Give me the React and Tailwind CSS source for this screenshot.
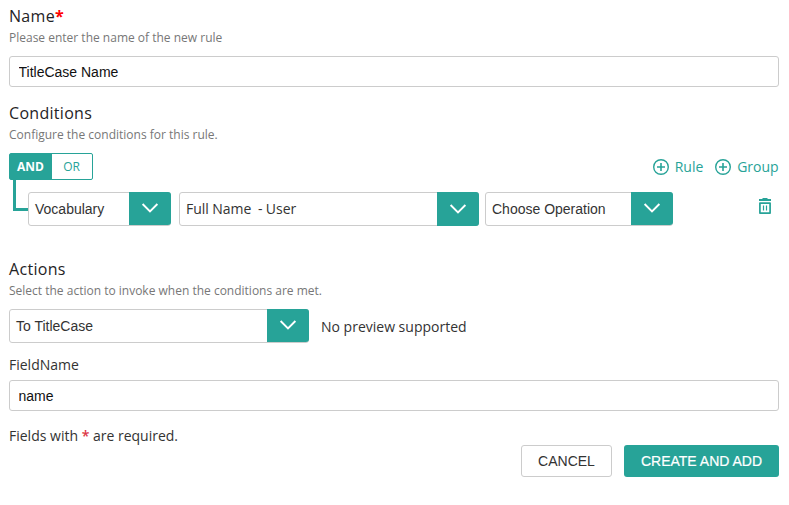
import React from "react";

const arial = "font-['Liberation_Sans',Arial,sans-serif]";

function Heading({ children }) {
  return <h2 className="h-6 text-[16px] leading-6 font-medium tracking-[0.3px] text-[#1f2326]">{children}</h2>;
}

function Hint({ children }) {
  return <p className="h-5 text-[12px] leading-5 text-[#777777] whitespace-nowrap">{children}</p>;
}

function TextField({ value }) {
  return (
    <input
      defaultValue={value}
      className={`${arial} block h-[31px] w-full rounded-[3px] border border-[#cccccc] bg-white px-[8.5px] pt-px text-[14px] text-[#111111] outline-none`}
    />
  );
}

function Select({ label, width, full, labelClass }) {
  return (
    <div className={`flex h-[34px] shrink-0 rounded-[3px] border border-[#cccccc] ${width}`}>
      <span className={`flex-1 whitespace-pre pl-[6px] text-[14px] leading-[32px] ${labelClass}`}>{label}</span>
      <button
        className={`-mt-px -mr-px flex w-[42px] items-center justify-center rounded-r-[3px] bg-[#27a398] ${full ? "h-[34px]" : "h-[33px]"}`}
      >
        <svg width="18" height="12" viewBox="0 0 18 12" fill="none" stroke="white" strokeWidth="1.9" className={full ? "" : "-mt-[2px]"}>
          <path d="M1.6 2 9 9.4 16.4 2" />
        </svg>
      </button>
    </div>
  );
}

function AddLink({ children }) {
  return (
    <button className="flex items-center gap-[6px] text-[14px] leading-5 text-[#27a398]">
      <svg width="16" height="16" viewBox="0 0 16 16" fill="none" stroke="currentColor" strokeWidth="1.4">
        <circle cx="8" cy="8" r="7.3" />
        <path d="M8 4v8M4 8h8" strokeWidth="1.6" />
      </svg>
      {children}
    </button>
  );
}

function Trash() {
  return (
    <svg width="12" height="16" viewBox="0 0 12 16" fill="none" stroke="#27a398">
      <path d="M0 2h12" strokeWidth="2" />
      <path d="M3.5.5h5" strokeWidth="1" />
      <path d="M.9 5.1h10.2v10H.9z" strokeWidth="1.7" strokeLinejoin="round" />
      <path d="M4.5 7.5v5M7.5 7.5v5" strokeWidth="1.2" />
    </svg>
  );
}

export default function App() {
  return (
    <div className="h-[505px] w-[789px] overflow-hidden bg-white pt-1 pr-[10px] pl-[9px] font-['Open_Sans',sans-serif] text-[#333333]">
      <section className="flex h-[97px] flex-col">
        <Heading>
          Name<span className="font-bold text-[#ff0000]">*</span>
        </Heading>
        <Hint>Please enter the name of the new rule</Hint>
        <div className="pt-2">
          <TextField value="TitleCase Name" />
        </div>
      </section>

      <section className="h-[156px]">
        <Heading>Conditions</Heading>
        <Hint>Configure the conditions for this rule.</Hint>
        <div className="flex items-center justify-between pt-2">
          <div className="flex h-[27px] w-[84px] rounded-[2px] border border-[#27a398] text-[12px] leading-[26px]">
            <button className="w-[42px] bg-[#27a398] pr-px font-bold text-white">AND</button>
            <button className="flex-1 pr-px text-[#27a398]">OR</button>
          </div>
          <div className="mr-[0.4px] flex gap-[11.8px]">
            <AddLink>Rule</AddLink>
            <AddLink>Group</AddLink>
          </div>
        </div>
        <div className="flex items-start">
          <div className="ml-1 h-[31px] w-[15px] shrink-0 border-b-[3px] border-l-[3px] border-[#27a398]" />
          <div className="flex flex-1 items-start pt-3">
            <Select label="Vocabulary" width="w-[143px]" labelClass={arial} />
            <div className="ml-2">
              <Select label="Full Name  - User" width="w-[300px]" full labelClass="[word-spacing:-0.3px]" />
            </div>
            <div className="ml-[6px]">
              <Select label="Choose Operation" width="w-[188px]" labelClass={arial} />
            </div>
            <button className="mt-[6px] mr-2 ml-auto">
              <Trash />
            </button>
          </div>
        </div>
      </section>

      <section>
        <Heading>Actions</Heading>
        <Hint>Select the action to invoke when the conditions are met.</Hint>
        <div className="flex items-center gap-3 pt-2">
          <Select label="To TitleCase" width="w-[300px]" labelClass={arial} />
          <span className="pt-[2px] text-[14px] leading-5">No preview supported</span>
        </div>
        <label className="mt-[12px] mb-[5px] block text-[14px] leading-5">FieldName</label>
        <TextField value="name" />
      </section>

      <footer className="flex justify-between pt-[15px]">
        <p className="text-[14px] leading-5">
          Fields with <span className="font-semibold text-[#dc3545]">*</span> are required.
        </p>
        <div className={`${arial} mt-[19px] flex h-8 gap-3 text-[14px]`}>
          <button className="w-[91px] rounded-[3px] border border-[#cccccc] bg-white text-[#333333]">CANCEL</button>
          <button className="w-[155px] rounded-[3px] bg-[#27a398] text-white [-webkit-text-stroke:0.2px_white]">CREATE AND ADD</button>
        </div>
      </footer>
    </div>
  );
}
